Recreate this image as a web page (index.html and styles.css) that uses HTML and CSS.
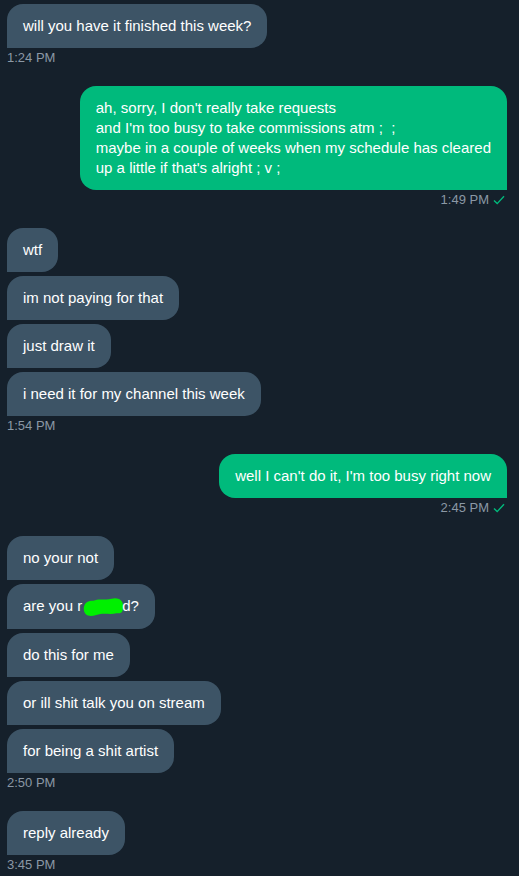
FILE: index.html
```html
<!DOCTYPE html>
<html lang="en">
<head>
  <meta charset="UTF-8">
  <meta name="viewport" content="width=device-width, initial-scale=1.0">
  <title>Messages</title>
  <link rel="stylesheet" href="styles.css">
</head>
<body>
  <div class="chat">

    <div class="group in">
      <div class="bubble">will you have it finished this week?</div>
      <div class="time">1:24 PM</div>
    </div>

    <div class="group out">
      <div class="bubble">ah, sorry, I don't really take requests<br>and I'm too busy to take commissions atm ; &nbsp;;<br>maybe in a couple of weeks when my schedule has cleared<br>up a little if that's alright ; v ;</div>
      <div class="time">1:49 PM <svg class="check" viewBox="0 0 12 10"><path d="M1 5.5 L4.2 8.6 L11 1.2" /></svg></div>
    </div>

    <div class="group in">
      <div class="bubble">wtf</div>
      <div class="bubble">im not paying for that</div>
      <div class="bubble">just draw it</div>
      <div class="bubble">i need it for my channel this week</div>
      <div class="time">1:54 PM</div>
    </div>

    <div class="group out">
      <div class="bubble">well I can't do it, I'm too busy right now</div>
      <div class="time">2:45 PM <svg class="check" viewBox="0 0 12 10"><path d="M1 5.5 L4.2 8.6 L11 1.2" /></svg></div>
    </div>

    <div class="group in">
      <div class="bubble">no your not</div>
      <div class="bubble">are you r<span class="scribble"><svg viewBox="0 0 44 22"><path d="M2 15 C1 8 6 4 12 5 C18 2 25 5 31 3 C37 1 43 4 43 10 C43 15 43 19 36 18 C30 20 22 17 15 20 C8 22 3 21 2 15 Z" /></svg></span>d?</div>
      <div class="bubble">do this for me</div>
      <div class="bubble">or ill shit talk you on stream</div>
      <div class="bubble">for being a shit artist</div>
      <div class="time">2:50 PM</div>
    </div>

    <div class="group in">
      <div class="bubble">reply already</div>
      <div class="time">3:45 PM</div>
    </div>

  </div>
</body>
</html>
```

FILE: styles.css
```css
body {
  margin: 0;
  background: #15202b;
  font-family: "Liberation Sans", Arial, sans-serif;
  color: #fff;
}
.chat {
  display: flex;
  flex-direction: column;
  gap: 20px;
  padding: 4px 12px 0 7px;
}
.group {
  display: flex;
  flex-direction: column;
  gap: 4px;
}
.group.in {
  align-items: flex-start;
}
.group.out {
  align-items: flex-end;
}
.bubble {
  padding: 12px 16px;
  font-size: 15px;
  line-height: 20px;
  border-radius: 16px;
  white-space: nowrap;
}
.in .bubble {
  background: #3d5466;
  border-bottom-left-radius: 0;
}
.out .bubble {
  background: #00ba7c;
  border-bottom-right-radius: 0;
}
.time {
  margin-top: -2px;
  font-size: 13px;
  line-height: 16px;
  color: #8b98a5;
  display: flex;
  align-items: center;
  gap: 4px;
}
.check {
  width: 12px;
  height: 10px;
  margin-right: 2px;
}
.check path {
  fill: none;
  stroke: #00ba7c;
  stroke-width: 1.4;
}
.scribble {
  display: inline-block;
  width: 44px;
  height: 21px;
  margin: 0 -3px 0 -1px;
  vertical-align: -6px;
}
.scribble svg {
  width: 100%;
  height: 100%;
}
.scribble path {
  fill: #00f000;
}
```
